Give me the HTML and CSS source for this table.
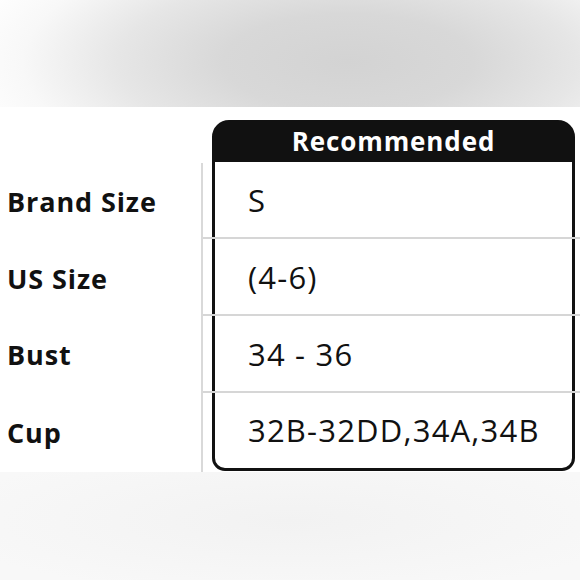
FILE: index.html
```html
<!DOCTYPE html>
<html lang="en">
<head>
<meta charset="utf-8">
<title>Size chart</title>
<link rel="stylesheet" href="styles.css">
</head>
<body>
<div class="page">
  <div class="band-top"></div>
  <section class="chart">
    <div class="labels">
      <div class="label-head"></div>
      <div class="label-row">Brand Size</div>
      <div class="label-row">US Size</div>
      <div class="label-row">Bust</div>
      <div class="label-row last">Cup</div>
    </div>
    <div class="box">
      <div class="box-head">Recommended</div>
      <div class="cell">S</div>
      <div class="divider"></div>
      <div class="cell">(4-6)</div>
      <div class="divider"></div>
      <div class="cell">34 - 36</div>
      <div class="divider"></div>
      <div class="cell cell-last">32B-32DD,34A,34B</div>
    </div>
  </section>
  <div class="band-bottom"></div>
</div>
</body>
</html>
```
FILE: styles.css
```css
* { box-sizing: border-box; }
html, body { margin: 0; padding: 0; background: #ffffff; }
body { font-family: "Open Sans", "Noto Sans", sans-serif; color: #111111; }
.page { width: 580px; height: 580px; overflow: hidden; display: flex; flex-direction: column; }

.band-top {
  height: 107px;
  flex: none;
  background: radial-gradient(ellipse 72% 150% at 60% 58%, #d3d3d3 0%, #d8d8d8 30%, #e6e6e6 55%, #f8f8f8 78%, #ffffff 95%);
}

.chart {
  height: 365px;
  flex: none;
  display: flex;
  padding-top: 13px;
  background: #ffffff;
}

.labels { width: 203px; flex: none; display: flex; flex-direction: column; }
.label-head { height: 43px; }
.label-row {
  height: 77px;
  border-right: 2px solid #d9d9d9;
  display: flex;
  align-items: center;
  padding-left: 7px;
  font-weight: 700;
  font-size: 27px;
  letter-spacing: 0.9px;
}
.label-row.last { height: 79px; }

.box {
  margin-left: 9px;
  width: 363px;
  height: 351px;
  border: 3px solid #111111;
  border-radius: 17px 17px 13px 13px;
  display: flex;
  flex-direction: column;
}
.box-head {
  height: 40px;
  background: #111111;
  color: #ffffff;
  border-radius: 13px 13px 0 0;
  margin: -1px -1px 0 -1px;
  display: flex;
  align-items: center;
  justify-content: center;
  font-weight: 700;
  font-size: 26px;
  letter-spacing: 0.9px;
  padding-bottom: 2px;
}
.cell {
  height: 75px;
  display: flex;
  align-items: center;
  padding-left: 33px;
  font-size: 31px;
  letter-spacing: 1.2px;
}
.cell-last { height: 74px; }
.divider {
  height: 2px;
  background: #d6d6d6;
  margin: 0 -8px 0 -12px;
}

.band-bottom {
  flex: 1;
  background: radial-gradient(ellipse 60% 70% at 50% 45%, #f2f2f2 0%, #f5f5f5 50%, #f8f8f8 100%);
}
```
